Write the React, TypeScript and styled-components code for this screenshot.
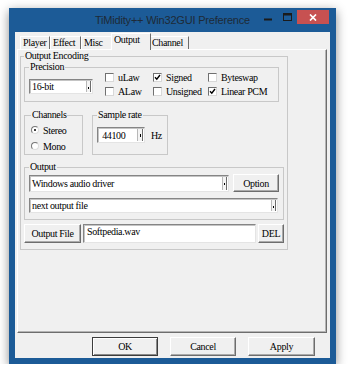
import React from 'react';
import styled, { createGlobalStyle } from 'styled-components';

const GlobalStyle = createGlobalStyle`
  body {
    margin: 0;
    background: #fff;
  }
`;

const Page = styled.div`
  padding: 8px 0 0 9px;
`;

const Window = styled.div`
  width: 327px;
  height: 356px;
  background: #1c5b97;
  display: flex;
  flex-direction: column;
  box-shadow: 0 3px 10px rgba(0, 0, 0, 0.45);
`;

const TitleBar = styled.div`
  height: 24px;
  flex: none;
  display: grid;
  grid-template-columns: 1fr auto 1fr;
`;

const Title = styled.div`
  grid-column: 2;
  font-family: "Liberation Sans", Arial, sans-serif;
  font-size: 11px;
  letter-spacing: -0.2px;
  line-height: 25px;
  color: #1e2a36;
  white-space: nowrap;
`;

const Controls = styled.div`
  grid-column: 3;
  justify-self: end;
  display: flex;
  align-items: flex-start;
  padding-right: 7px;
`;

const Glyph = styled.svg<{ $top: number; $gap: number }>`
  display: block;
  margin-top: ${p => p.$top}px;
  margin-right: ${p => p.$gap}px;
`;

const CloseButton = styled.div`
  width: 32px;
  height: 14px;
  margin-top: 2px;
  background: #c75151;
  display: flex;
  align-items: center;
  justify-content: center;
`;

const Client = styled.div`
  flex: 1;
  margin: 0 6px 6px;
  background: #f0f0f0;
  padding: 1px 3px 2px 2px;
  display: flex;
  flex-direction: column;
  font-family: "Liberation Serif", "DejaVu Serif", serif;
  font-size: 10px;
  letter-spacing: -0.35px;
  color: #000;
`;

const TabStrip = styled.div`
  height: 16px;
  flex: none;
  display: flex;
  align-items: flex-end;
  padding-left: 3px;
`;

const Tab = styled.div<{ $w: number; $active?: boolean }>`
  box-sizing: border-box;
  width: ${p => p.$w}px;
  height: ${p => (p.$active ? 17 : 13)}px;
  margin: ${p => (p.$active ? '0 -2px -1px -1px' : '0')};
  padding-left: 2px;
  line-height: 12px;
  border-top: 1px solid #fff;
  border-left: 1px solid #fff;
  border-right: 1px solid #6d6d6d;
  background: #f0f0f0;
  position: relative;
  z-index: ${p => (p.$active ? 1 : 0)};
  white-space: nowrap;
`;

const Panel = styled.div`
  box-sizing: border-box;
  height: 284px;
  flex: none;
  border: 1px solid;
  border-color: #fff #6d6d6d #6d6d6d #fff;
  box-shadow: inset -1px -1px 0 #b4b4b4;
  padding-left: 2px;
`;

const ButtonRow = styled.div`
  margin-top: 4px;
  display: flex;
  justify-content: flex-end;
  gap: 12px;
  padding-right: 12px;
`;

const PushButton = styled.button<{ $w: number; $h?: number; $default?: boolean }>`
  box-sizing: border-box;
  width: ${p => p.$w}px;
  height: ${p => p.$h ?? 19}px;
  padding: 0;
  font: inherit;
  letter-spacing: inherit;
  color: #000;
  background: #f0f0f0;
  border: 1px solid;
  border-color: ${p => (p.$default ? '#3c3c3c' : '#fff #6d6d6d #6d6d6d #fff')};
  box-shadow: ${p =>
    p.$default
      ? 'inset 1px 1px 0 #fff, inset -1px -1px 0 #8a8a8a'
      : 'inset -1px -1px 0 #ababab'};
  flex: none;
`;

const GroupBox = styled.fieldset<{ $w: number }>`
  box-sizing: border-box;
  margin: 0;
  min-width: 0;
  width: ${p => p.$w}px;
  border: 1px solid #c8c8c8;
  padding: 0;
`;

const GroupLabel = styled.legend`
  padding: 0 1px;
  line-height: 12px;
  font-size: 10px;
`;

const EncodingGroup = styled(GroupBox)`
  padding: 0 0 6px 3px;
`;

const PrecisionGroup = styled(GroupBox)`
  margin-top: -1px;
  padding: 0 0 0 4px;
  display: flex;
  align-items: flex-start;
`;

const MiddleRow = styled.div`
  margin-top: 7px;
  display: flex;
  gap: 9px;
`;

const ChannelsGroup = styled(GroupBox)`
  padding: 1px 0 0 6px;
`;

const RateGroup = styled(GroupBox)`
  padding: 6px 0 11px 4px;
  display: flex;
  align-items: center;
`;

const OutputGroup = styled(GroupBox)`
  margin-top: 6px;
  padding: 1px 0 6px 4px;
`;

const OutputRow = styled.div<{ $gap?: number }>`
  display: flex;
  align-items: center;
  gap: 4px;
  margin-top: ${p => p.$gap ?? 0}px;
`;

const FileRow = styled.div`
  margin-top: 4px;
  display: flex;
  gap: 2px;
`;

const Sunken = styled.div<{ $w: number; $h: number }>`
  box-sizing: border-box;
  width: ${p => p.$w}px;
  height: ${p => p.$h}px;
  background: #fff;
  border: 1px solid;
  border-color: #858585 #e4e4e4 #e4e4e4 #858585;
  box-shadow: inset 1px 1px 0 #c4c4c4;
  display: flex;
  flex: none;
`;

const FieldText = styled.span<{ $top?: boolean }>`
  flex: 1;
  padding: ${p => (p.$top ? '1px 0 0 3px' : '0 0 0 2px')};
  display: flex;
  align-items: ${p => (p.$top ? 'flex-start' : 'center')};
  white-space: nowrap;
  overflow: hidden;
`;

const DropButton = styled.span`
  width: 3px;
  margin: 1px 1px 1px 0;
  border-left: 1px solid #b8b8b8;
  border-right: 1px solid #6d6d6d;
  background: #f4f4f4;
  display: flex;
  align-items: center;
  justify-content: center;
  &::after {
    content: "";
    width: 1px;
    height: 2px;
    margin-top: 2px;
    background: #000;
  }
`;

const SpinButton = styled(DropButton)`
  width: 4px;
  &::after {
    height: 3px;
    margin-top: 0;
  }
`;

const ComboBox = ({ w, h, text }: { w: number; h: number; text: string }) => (
  <Sunken $w={w} $h={h}>
    <FieldText>{text}</FieldText>
    <DropButton />
  </Sunken>
);

const PrecisionCombo = styled.div`
  margin-top: 6px;
`;

const CheckGrid = styled.div`
  margin-left: 12px;
  display: grid;
  grid-template-columns: 48px 55px auto;
  grid-auto-rows: 14px;
`;

const CheckItem = styled.label`
  display: flex;
  align-items: flex-start;
  gap: 4px;
  line-height: 10px;
  white-space: nowrap;
`;

const CheckBox = styled.span`
  box-sizing: border-box;
  width: 9px;
  height: 9px;
  flex: none;
  background: #fff;
  border: 1px solid;
  border-color: #707070 #d8d8d8 #d8d8d8 #707070;
  display: flex;
`;

const Check = ({ label, checked }: { label: string; checked?: boolean }) => (
  <CheckItem>
    <CheckBox>
      {checked && (
        <svg width="7" height="7" viewBox="0 0 7 7">
          <polyline points="1,3.2 2.8,5.2 6,1" fill="none" stroke="#000" strokeWidth="1.4" />
        </svg>
      )}
    </CheckBox>
    {label}
  </CheckItem>
);

const RadioItem = styled.label`
  height: 16px;
  display: flex;
  align-items: center;
  gap: 4px;
`;

const RadioDot = styled.span<{ $on?: boolean }>`
  box-sizing: border-box;
  width: 8px;
  height: 8px;
  border-radius: 50%;
  background: #fff;
  border: 1px solid;
  border-color: #777 #ddd #ddd #777;
  display: flex;
  align-items: center;
  justify-content: center;
  &::after {
    content: "";
    width: 2px;
    height: 2px;
    border-radius: 50%;
    background: ${p => (p.$on ? '#000' : 'transparent')};
  }
`;

const Unit = styled.span`
  margin-left: 6px;
`;

const App = () => (
  <Page>
    <GlobalStyle />
    <Window>
      <TitleBar>
        <Title>TiMidity++ Win32GUI Preference</Title>
        <Controls>
          <Glyph $top={10} $gap={11} width="8" height="3" viewBox="0 0 8 3">
            <rect x="0" y="0.5" width="8" height="2" fill="#1b1b1b" />
          </Glyph>
          <Glyph $top={5} $gap={5} width="9" height="8" viewBox="0 0 9 8">
            <rect x="0.5" y="0.5" width="8" height="7" fill="none" stroke="#1b1b1b" />
            <rect x="0.5" y="0.5" width="8" height="2" fill="#1b1b1b" />
          </Glyph>
          <CloseButton>
            <svg width="8" height="7" viewBox="0 0 8 7">
              <path d="M1 0.5 L7 6.5 M7 0.5 L1 6.5" stroke="#fff" strokeWidth="1.7" />
            </svg>
          </CloseButton>
        </Controls>
      </TitleBar>
      <Client>
        <TabStrip>
          <Tab $w={30}>Player</Tab>
          <Tab $w={31}>Effect</Tab>
          <Tab $w={31}>Misc</Tab>
          <Tab $w={40} $active>Output</Tab>
          <Tab $w={40}>Channel</Tab>
        </TabStrip>
        <Panel>
          <EncodingGroup $w={268}>
            <GroupLabel>Output Encoding</GroupLabel>
            <PrecisionGroup $w={255}>
              <GroupLabel>Precision</GroupLabel>
              <PrecisionCombo>
                <ComboBox w={64} h={15} text="16-bit" />
              </PrecisionCombo>
              <CheckGrid>
                <Check label="uLaw" />
                <Check label="Signed" checked />
                <Check label="Byteswap" />
                <Check label="ALaw" />
                <Check label="Unsigned" />
                <Check label="Linear PCM" checked />
              </CheckGrid>
            </PrecisionGroup>
            <MiddleRow>
              <ChannelsGroup $w={59}>
                <GroupLabel>Channels</GroupLabel>
                <RadioItem>
                  <RadioDot $on />
                  Stereo
                </RadioItem>
                <RadioItem>
                  <RadioDot />
                  Mono
                </RadioItem>
              </ChannelsGroup>
              <RateGroup $w={76}>
                <GroupLabel>Sample rate</GroupLabel>
                <Sunken $w={48} $h={16}>
                  <FieldText>&nbsp;44100</FieldText>
                  <SpinButton />
                </Sunken>
                <Unit>Hz</Unit>
              </RateGroup>
            </MiddleRow>
            <OutputGroup $w={260}>
              <GroupLabel>Output</GroupLabel>
              <OutputRow>
                <ComboBox w={200} h={17} text="Windows audio driver" />
                <PushButton $w={46} $h={18}>Option</PushButton>
              </OutputRow>
              <OutputRow $gap={6}>
                <ComboBox w={249} h={15} text="next output file" />
              </OutputRow>
            </OutputGroup>
            <FileRow>
              <PushButton $w={57}>Output File</PushButton>
              <Sunken $w={173} $h={19}>
                <FieldText $top>Softpedia.wav</FieldText>
              </Sunken>
              <PushButton $w={26}>DEL</PushButton>
            </FileRow>
          </EncodingGroup>
        </Panel>
        <ButtonRow>
          <PushButton $w={66} $default>OK</PushButton>
          <PushButton $w={66}>Cancel</PushButton>
          <PushButton $w={67}>Apply</PushButton>
        </ButtonRow>
      </Client>
    </Window>
  </Page>
);

export default App;
